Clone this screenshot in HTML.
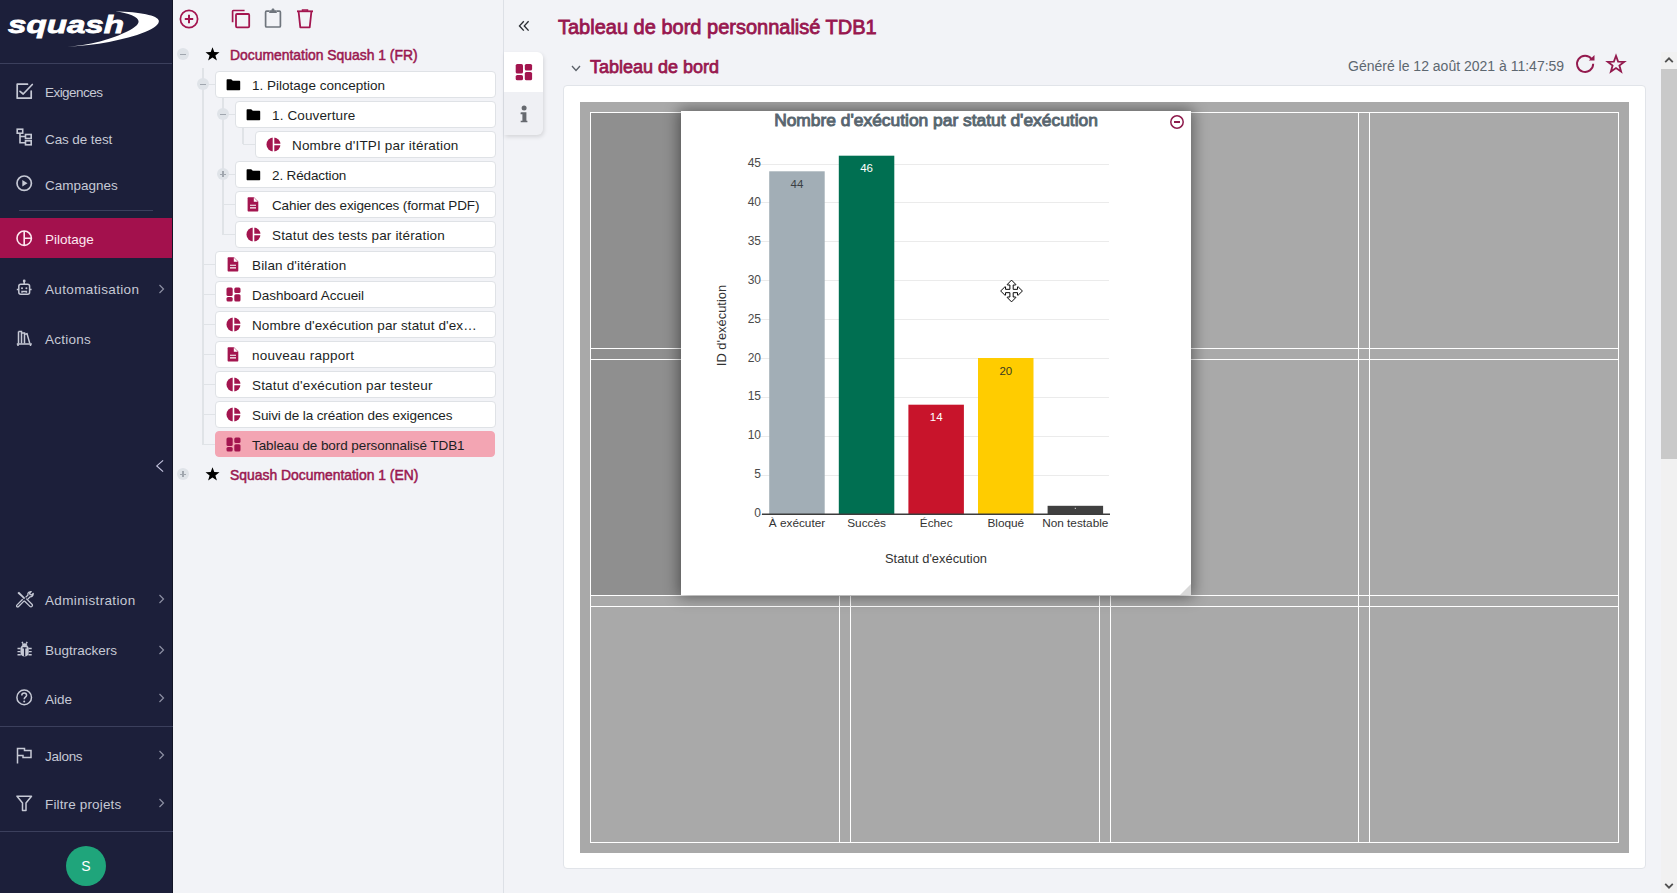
<!DOCTYPE html>
<html><head><meta charset="utf-8">
<style>
*{box-sizing:border-box;margin:0;padding:0}
html,body{width:1677px;height:893px;overflow:hidden;background:#f2f3f7;font-family:"Liberation Sans",sans-serif}
.abs{position:absolute}
#sb{position:absolute;left:0;top:0;width:173px;height:893px;background:#1c1f3a}
.sep{position:absolute;height:1px;background:#3b3f5c}
.mt{position:absolute;left:45px;color:#c6c9d5;font-size:13.5px;line-height:13.5px;white-space:nowrap}
.ic{position:absolute;left:16px}
.ch{position:absolute;left:158px}
#tree{position:absolute;left:0;top:0}
.node{position:absolute;height:27px;background:#fff;border:1px solid #dfe2e6;border-radius:4px}
.node.sel{background:#f3a5b3;border-color:#f3a5b3}
.nt{position:absolute;margin-top:1px;font-size:13.5px;line-height:13.5px;color:#1c1f24;white-space:nowrap}
.rt{position:absolute;font-size:13.9px;line-height:13.9px;font-weight:400;-webkit-text-stroke:0.5px currentColor;color:#9a1850;white-space:nowrap}
.vl{position:absolute;width:1.5px;background:#e0e3e7}
.hl{position:absolute;height:1px;background:#e0e3e7}
.tg{position:absolute;width:12px;height:12px;border-radius:50%;background:#dfe3e8}
.tg:before{content:"";position:absolute;left:3px;top:5.5px;width:6px;height:1.3px;background:#a0a6ae}
.tg.plus:after{content:"";position:absolute;left:5.4px;top:3px;width:1.3px;height:6px;background:#a0a6ae}
.ttl{font-size:20px;line-height:20px;font-weight:400;-webkit-text-stroke:0.8px currentColor;color:#98174f;white-space:nowrap}
.sub{font-size:18px;line-height:18px;font-weight:400;-webkit-text-stroke:0.75px currentColor;color:#98174f;white-space:nowrap}
.gen{font-size:14px;line-height:14px;color:#5d6770;white-space:nowrap}
.cell{position:absolute;border:1px solid #fff}
.ctt{font-size:17.4px;line-height:17.4px;font-weight:400;-webkit-text-stroke:0.95px currentColor;color:#58666f;white-space:nowrap}
.tk{font-size:12px;line-height:13px;color:#4a4a4a;text-align:right}
.axt{font-size:12.9px;line-height:13px;color:#333;white-space:nowrap}
</style></head>
<body>
<!-- SIDEBAR -->
<div id="sb">
  <svg class="abs" style="left:0;top:0" width="173" height="60" viewBox="0 0 173 60">
    <text x="8" y="32.6" font-family="Liberation Sans" font-weight="700" font-style="italic" font-size="24.5" fill="#fff" stroke="#fff" stroke-width="0.8" textLength="116" lengthAdjust="spacingAndGlyphs">squash</text>
    <path d="M67.6 46.7C95 45.5 125 40 145 32C155 28 159.5 24 158.8 20.5C158 15.5 140 12 115.4 11.2C128 13 139 16.5 138.6 21.8C138 27.5 123 35 100 41.5C88 44.5 77 46 67.6 46.7Z" fill="#fff"/>
  </svg>
  <div class="sep" style="left:0;top:63px;width:173px"></div>

  <!-- Exigences -->
  <svg class="ic" style="top:83px" width="18" height="17" viewBox="0 0 18 17"><path d="M11.5 1.2H1.2V15.2H15.2V8" fill="none" stroke="#c6c9d5" stroke-width="1.7" stroke-linejoin="round" stroke-linecap="round"/><path d="M4 8.3L7.2 11L16.3 1.5" fill="none" stroke="#c6c9d5" stroke-width="1.7" stroke-linecap="round" stroke-linejoin="round"/></svg>
  <div class="mt" style="top:86px;letter-spacing:-0.55px">Exigences</div>
  <!-- Cas de test -->
  <svg class="ic" style="top:128px" width="18" height="18" viewBox="0 0 18 18"><g fill="none" stroke="#c6c9d5" stroke-width="1.6"><rect x="1.2" y="1.2" width="5.5" height="4"/><rect x="9.5" y="6.5" width="5.7" height="4"/><rect x="9.5" y="12.8" width="5.7" height="4"/><path d="M4 5.2V14.8H9.5M4 8.5H9.5"/></g></svg>
  <div class="mt" style="top:133.3px;letter-spacing:-0.1px">Cas de test</div>
  <!-- Campagnes -->
  <svg class="ic" style="top:175px" width="18" height="18" viewBox="0 0 18 18"><circle cx="8.2" cy="8.2" r="7.2" fill="none" stroke="#c6c9d5" stroke-width="1.7"/><path d="M6.3 5V11.4L11.5 8.2Z" fill="#c6c9d5"/></svg>
  <div class="mt" style="top:179.3px">Campagnes</div>
  <div class="sep" style="left:19px;top:210px;width:134px"></div>
  <!-- Pilotage -->
  <div class="abs" style="left:0;top:218px;width:173px;height:40px;background:#a3114d"></div>
  <svg class="ic" style="top:230px" width="18" height="18" viewBox="0 0 18 18"><g fill="none" stroke="#fde8f0" stroke-width="1.6"><circle cx="8.2" cy="8.2" r="7.2"/><path d="M8.2 1V15.4M8.2 8.2H15.4"/></g></svg>
  <div class="mt" style="top:233.3px;color:#fde8f0">Pilotage</div>
  <!-- Automatisation -->
  <svg class="ic" style="top:279px" width="18" height="18" viewBox="0 0 18 18"><g fill="none" stroke="#c6c9d5" stroke-width="1.5"><rect x="2.8" y="5.2" width="10.8" height="10" rx="2"/><path d="M8.2 2.5V5.2M0.8 10.5H2.8M13.6 10.5H15.6"/><path d="M6 13.8V12.5H10.4V13.8"/></g><circle cx="8.2" cy="2" r="1.4" fill="#c6c9d5"/><circle cx="6" cy="9.3" r="1" fill="#c6c9d5"/><circle cx="10.4" cy="9.3" r="1" fill="#c6c9d5"/></svg>
  <div class="mt" style="top:283.3px;letter-spacing:0.36px">Automatisation</div>
  <svg class="ch" style="top:284px" width="7" height="10" viewBox="0 0 7 10"><path d="M1.5 1L5.5 5L1.5 9" fill="none" stroke="#8d90a3" stroke-width="1.2"/></svg>
  <!-- Actions -->
  <svg class="ic" style="top:330px" width="18" height="18" viewBox="0 0 18 18"><g fill="none" stroke="#c6c9d5" stroke-width="1.5"><path d="M2.5 1.5V13.5M2.5 1.5H5.5V13.5M5.5 3H8.5V13.5"/><path d="M9 4.2L11 3.6L13.8 13.5"/><path d="M0.8 14H15.8M2 14V16M14.5 14V16"/></g></svg>
  <div class="mt" style="top:333.3px;letter-spacing:0.25px">Actions</div>

  <svg class="abs" style="left:155px;top:459px" width="10" height="14" viewBox="0 0 10 14"><path d="M8.1 1.4L1.8 6.9L8.1 12.6" fill="none" stroke="#c3c3de" stroke-width="1.2"/></svg>
  <div class="abs" style="left:172px;top:0;width:1px;height:893px;background:#131527"></div>
  <!-- Administration -->
  <svg class="ic" style="top:591px" width="18" height="18" viewBox="0 0 18 18"><g fill="none" stroke="#c6c9d5" stroke-width="1.3" stroke-linejoin="round"><path d="M10.3 7.6L16 13.3C16.6 13.9 16.6 14.8 16 15.4S14.5 16 13.9 15.4L8.2 9.7"/><path d="M8.2 9.9L2.6 15.5C2 16.1 1.3 16.1 0.9 15.7S0.5 14.5 1.1 13.9L6.7 8.3"/><path d="M9.6 6.4L12 4C11.6 2.6 12.2 1 13.8 0.8L15.2 0.6L13.6 2.4L14.2 3.6L15.6 4L17.2 2.5C17.3 4.6 16 5.8 14.2 5.8L11.6 8.4"/></g><path d="M1.6 1.8L3 0.8L7 4.8L9.2 7L8 8.2L5.8 6L1.8 2.6Z" fill="#c6c9d5"/></svg>
  <div class="mt" style="top:594.3px;letter-spacing:0.36px">Administration</div>
  <svg class="ch" style="top:594px" width="7" height="10" viewBox="0 0 7 10"><path d="M1.5 1L5.5 5L1.5 9" fill="none" stroke="#8d90a3" stroke-width="1.2"/></svg>
  <!-- Bugtrackers -->
  <svg class="ic" style="top:641px" width="18" height="18" viewBox="0 0 18 18"><path d="M4.5 7.2C4.5 5.3 6.3 4 8.6 4S12.7 5.3 12.7 7.2V11.8C12.7 14 11 15.6 8.6 15.6S4.5 14 4.5 11.8Z" fill="#c6c9d5"/><path d="M5.8 4.8C5.8 3.2 7 2.2 8.6 2.2S11.4 3.2 11.4 4.8Z" fill="#c6c9d5"/><path d="M6 0.8L7 2.6M11.2 0.8L10.2 2.6M1.5 7.5H4.5M1.5 10.6H4.5M1.5 13.8H4.8M12.7 7.5H15.7M12.7 10.6H15.7M12.4 13.8H15.7" stroke="#c6c9d5" stroke-width="1.4"/><path d="M8.6 7V15.2M6.6 6.8H10.6" stroke="#1c1f3a" stroke-width="1.3"/></svg>
  <div class="mt" style="top:644.3px">Bugtrackers</div>
  <svg class="ch" style="top:645px" width="7" height="10" viewBox="0 0 7 10"><path d="M1.5 1L5.5 5L1.5 9" fill="none" stroke="#8d90a3" stroke-width="1.2"/></svg>
  <!-- Aide -->
  <svg class="ic" style="top:689px" width="18" height="18" viewBox="0 0 18 18"><circle cx="8.2" cy="8.4" r="7.3" fill="none" stroke="#c6c9d5" stroke-width="1.5"/><path d="M5.8 6.4C5.8 4.9 6.9 4 8.2 4S10.6 4.9 10.6 6.3C10.6 8.2 8.2 8.2 8.2 10.2" fill="none" stroke="#c6c9d5" stroke-width="1.5"/><circle cx="8.2" cy="12.5" r="1" fill="#c6c9d5"/></svg>
  <div class="mt" style="top:693.3px">Aide</div>
  <svg class="ch" style="top:693px" width="7" height="10" viewBox="0 0 7 10"><path d="M1.5 1L5.5 5L1.5 9" fill="none" stroke="#8d90a3" stroke-width="1.2"/></svg>
  <div class="sep" style="left:0;top:726px;width:173px"></div>
  <!-- Jalons -->
  <svg class="ic" style="top:747px" width="18" height="18" viewBox="0 0 18 18"><path d="M1.5 16.5V1.5H8.5V3.5H15V10.5H7V8.5H1.5" fill="none" stroke="#c6c9d5" stroke-width="1.5"/></svg>
  <div class="mt" style="top:750.3px;letter-spacing:-0.28px">Jalons</div>
  <svg class="ch" style="top:750px" width="7" height="10" viewBox="0 0 7 10"><path d="M1.5 1L5.5 5L1.5 9" fill="none" stroke="#8d90a3" stroke-width="1.2"/></svg>
  <!-- Filtre projets -->
  <svg class="ic" style="top:795px" width="18" height="18" viewBox="0 0 18 18"><path d="M1 1.2H15.5L10 8V15.5H6.5V8Z" fill="none" stroke="#c6c9d5" stroke-width="1.5" stroke-linejoin="round"/></svg>
  <div class="mt" style="top:798.3px;letter-spacing:0.15px">Filtre projets</div>
  <svg class="ch" style="top:798px" width="7" height="10" viewBox="0 0 7 10"><path d="M1.5 1L5.5 5L1.5 9" fill="none" stroke="#8d90a3" stroke-width="1.2"/></svg>
  <div class="sep" style="left:0;top:831px;width:173px"></div>
  <div class="abs" style="left:66px;top:846px;width:40px;height:40px;border-radius:50%;background:#1fa57b;color:#fff;font-size:14px;line-height:40px;text-align:center">S</div>
</div>

<!-- TREE -->
<div id="tree">
<svg class="abs" style="left:179px;top:9px" width="20" height="20" viewBox="0 0 20 20"><circle cx="10" cy="10" r="8.6" fill="none" stroke="#a3154f" stroke-width="1.7"/><path d="M10 5.8V14.2M5.8 10H14.2" stroke="#a3154f" stroke-width="2"/></svg>
<svg class="abs" style="left:231px;top:9px" width="20" height="20" viewBox="0 0 20 20"><path d="M1.6 13.2V2.2C1.6 1.8 1.9 1.5 2.3 1.5H13.6" fill="none" stroke="#a3154f" stroke-width="1.7"/><rect x="5" y="5" width="13.2" height="13.3" rx="1" fill="none" stroke="#a3154f" stroke-width="1.8"/></svg>
<svg class="abs" style="left:264px;top:8px" width="19" height="21" viewBox="0 0 19 21"><path d="M5 3.2H2.6C2 3.2 1.6 3.6 1.6 4.2V18C1.6 18.6 2 19 2.6 19H15.4C16 19 16.4 18.6 16.4 18V4.2C16.4 3.6 16 3.2 15.4 3.2H13" fill="none" stroke="#6f757d" stroke-width="1.7"/><path d="M5.2 2.2H7.5C7.6 1 8.2 0.6 9 0.6S10.4 1 10.5 2.2H12.8V5H5.2Z" fill="#6f757d"/></svg>
<svg class="abs" style="left:296px;top:9px" width="18" height="20" viewBox="0 0 18 20"><path d="M1 2.3H17" stroke="#a3154f" stroke-width="1.8"/><path d="M6.5 2V0.9H11.5V2" fill="none" stroke="#a3154f" stroke-width="1.5"/><path d="M2.6 2.5L4.3 18.3H13.7L15.4 2.5" fill="none" stroke="#a3154f" stroke-width="1.8" stroke-linejoin="round"/></svg>
<div class="tg" style="left:177px;top:48px"></div>
<svg class="abs" style="left:205px;top:47px" width="15" height="14" viewBox="0 0 15 14"><path d="M7.5 0.2L9.3 5.1L14.5 5.2L10.4 8.4L11.9 13.4L7.5 10.4L3.1 13.4L4.6 8.4L0.5 5.2L5.7 5.1Z" fill="#000"/></svg>
<div class="rt" style="left:230px;top:49px">Documentation Squash 1 (FR)</div>
<div class="vl" style="left:202px;top:68px;height:377px"></div>
<div class="vl" style="left:222px;top:98px;height:137px"></div>
<div class="vl" style="left:242px;top:128px;height:16px"></div>
<div class="hl" style="left:203px;top:84px;width:12px"></div>
<div class="tg" style="left:197px;top:78px"></div>
<div class="node" style="left:215px;top:71px;width:281px"></div>
<svg class="abs" style="left:226px;top:79px" width="15" height="12" viewBox="0 0 15 12"><path d="M0.6 1.3C0.6 0.7 1 0.3 1.6 0.3H5.2L6.8 1.8H13.2C13.8 1.8 14.2 2.2 14.2 2.8V10.2C14.2 10.8 13.8 11.2 13.2 11.2H1.6C1 11.2 0.6 10.8 0.6 10.2Z" fill="#000"/></svg>
<div class="nt" style="left:252px;top:78px;letter-spacing:0.01px">1. Pilotage conception</div>
<div class="hl" style="left:223px;top:114px;width:12px"></div>
<div class="tg" style="left:217px;top:108px"></div>
<div class="node" style="left:235px;top:101px;width:261px"></div>
<svg class="abs" style="left:246px;top:109px" width="15" height="12" viewBox="0 0 15 12"><path d="M0.6 1.3C0.6 0.7 1 0.3 1.6 0.3H5.2L6.8 1.8H13.2C13.8 1.8 14.2 2.2 14.2 2.8V10.2C14.2 10.8 13.8 11.2 13.2 11.2H1.6C1 11.2 0.6 10.8 0.6 10.2Z" fill="#000"/></svg>
<div class="nt" style="left:272px;top:108px;letter-spacing:0.13px">1. Couverture</div>
<div class="hl" style="left:243px;top:144px;width:12px"></div>
<div class="node" style="left:255px;top:131px;width:241px"></div>
<svg class="abs" style="left:266px;top:137px" width="15" height="15" viewBox="0 0 15 15"><circle cx="7.5" cy="7.5" r="7" fill="#a3154f"/><path d="M7.5 0V15M7.5 7.5H15" stroke="#fff" stroke-width="1.6"/></svg>
<div class="nt" style="left:292px;top:138px;letter-spacing:0.18px">Nombre d&#39;ITPI par itération</div>
<div class="hl" style="left:223px;top:174px;width:12px"></div>
<div class="tg plus" style="left:217px;top:168px"></div>
<div class="node" style="left:235px;top:161px;width:261px"></div>
<svg class="abs" style="left:246px;top:169px" width="15" height="12" viewBox="0 0 15 12"><path d="M0.6 1.3C0.6 0.7 1 0.3 1.6 0.3H5.2L6.8 1.8H13.2C13.8 1.8 14.2 2.2 14.2 2.8V10.2C14.2 10.8 13.8 11.2 13.2 11.2H1.6C1 11.2 0.6 10.8 0.6 10.2Z" fill="#000"/></svg>
<div class="nt" style="left:272px;top:168px;letter-spacing:-0.13px">2. Rédaction</div>
<div class="hl" style="left:223px;top:204px;width:12px"></div>
<div class="node" style="left:235px;top:191px;width:261px"></div>
<svg class="abs" style="left:247px;top:197px" width="12" height="15" viewBox="0 0 12 15"><path d="M1.6 0.2H7L11.3 4.5V13.4C11.3 14 10.9 14.4 10.3 14.4H1.6C1 14.4 0.6 14 0.6 13.4V1.2C0.6 0.6 1 0.2 1.6 0.2Z" fill="#a3154f"/><path d="M6.8 0.6V4.7H10.9Z" fill="#fff"/><path d="M3 8.3H9M3 10.9H9" stroke="#fff" stroke-width="1.1"/></svg>
<div class="nt" style="left:272px;top:198px;letter-spacing:-0.13px">Cahier des exigences (format PDF)</div>
<div class="hl" style="left:223px;top:234px;width:12px"></div>
<div class="node" style="left:235px;top:221px;width:261px"></div>
<svg class="abs" style="left:246px;top:227px" width="15" height="15" viewBox="0 0 15 15"><circle cx="7.5" cy="7.5" r="7" fill="#a3154f"/><path d="M7.5 0V15M7.5 7.5H15" stroke="#fff" stroke-width="1.6"/></svg>
<div class="nt" style="left:272px;top:228px;letter-spacing:0.16px">Statut des tests par itération</div>
<div class="hl" style="left:203px;top:264px;width:12px"></div>
<div class="node" style="left:215px;top:251px;width:281px"></div>
<svg class="abs" style="left:227px;top:257px" width="12" height="15" viewBox="0 0 12 15"><path d="M1.6 0.2H7L11.3 4.5V13.4C11.3 14 10.9 14.4 10.3 14.4H1.6C1 14.4 0.6 14 0.6 13.4V1.2C0.6 0.6 1 0.2 1.6 0.2Z" fill="#a3154f"/><path d="M6.8 0.6V4.7H10.9Z" fill="#fff"/><path d="M3 8.3H9M3 10.9H9" stroke="#fff" stroke-width="1.1"/></svg>
<div class="nt" style="left:252px;top:258px;letter-spacing:0.15px">Bilan d&#39;itération</div>
<div class="hl" style="left:203px;top:294px;width:12px"></div>
<div class="node" style="left:215px;top:281px;width:281px"></div>
<svg class="abs" style="left:226px;top:287px" width="15" height="15" viewBox="0 0 15 15"><g fill="#a3154f"><rect x="0.5" y="0.5" width="6.2" height="8.4" rx="1.5"/><rect x="8.3" y="0.5" width="6.2" height="5.6" rx="1.5"/><rect x="0.5" y="10" width="6.2" height="4.5" rx="1.5"/><rect x="8.3" y="7.2" width="6.2" height="7.3" rx="1.5"/></g></svg>
<div class="nt" style="left:252px;top:288px;letter-spacing:-0.03px">Dashboard Accueil</div>
<div class="hl" style="left:203px;top:324px;width:12px"></div>
<div class="node" style="left:215px;top:311px;width:281px"></div>
<svg class="abs" style="left:226px;top:317px" width="15" height="15" viewBox="0 0 15 15"><circle cx="7.5" cy="7.5" r="7" fill="#a3154f"/><path d="M7.5 0V15M7.5 7.5H15" stroke="#fff" stroke-width="1.6"/></svg>
<div class="nt" style="left:252px;top:318px;letter-spacing:0.1px">Nombre d&#39;exécution par statut d&#39;ex…</div>
<div class="hl" style="left:203px;top:354px;width:12px"></div>
<div class="node" style="left:215px;top:341px;width:281px"></div>
<svg class="abs" style="left:227px;top:347px" width="12" height="15" viewBox="0 0 12 15"><path d="M1.6 0.2H7L11.3 4.5V13.4C11.3 14 10.9 14.4 10.3 14.4H1.6C1 14.4 0.6 14 0.6 13.4V1.2C0.6 0.6 1 0.2 1.6 0.2Z" fill="#a3154f"/><path d="M6.8 0.6V4.7H10.9Z" fill="#fff"/><path d="M3 8.3H9M3 10.9H9" stroke="#fff" stroke-width="1.1"/></svg>
<div class="nt" style="left:252px;top:348px;letter-spacing:0.26px">nouveau rapport</div>
<div class="hl" style="left:203px;top:384px;width:12px"></div>
<div class="node" style="left:215px;top:371px;width:281px"></div>
<svg class="abs" style="left:226px;top:377px" width="15" height="15" viewBox="0 0 15 15"><circle cx="7.5" cy="7.5" r="7" fill="#a3154f"/><path d="M7.5 0V15M7.5 7.5H15" stroke="#fff" stroke-width="1.6"/></svg>
<div class="nt" style="left:252px;top:378px;letter-spacing:0.18px">Statut d&#39;exécution par testeur</div>
<div class="hl" style="left:203px;top:414px;width:12px"></div>
<div class="node" style="left:215px;top:401px;width:281px"></div>
<svg class="abs" style="left:226px;top:407px" width="15" height="15" viewBox="0 0 15 15"><circle cx="7.5" cy="7.5" r="7" fill="#a3154f"/><path d="M7.5 0V15M7.5 7.5H15" stroke="#fff" stroke-width="1.6"/></svg>
<div class="nt" style="left:252px;top:408px;letter-spacing:-0.11px">Suivi de la création des exigences</div>
<div class="hl" style="left:203px;top:444px;width:12px"></div>
<div class="node sel" style="left:215px;top:431px;width:280px;height:26px"></div>
<svg class="abs" style="left:226px;top:437px" width="15" height="15" viewBox="0 0 15 15"><g fill="#a3154f"><rect x="0.5" y="0.5" width="6.2" height="8.4" rx="1.5"/><rect x="8.3" y="0.5" width="6.2" height="5.6" rx="1.5"/><rect x="0.5" y="10" width="6.2" height="4.5" rx="1.5"/><rect x="8.3" y="7.2" width="6.2" height="7.3" rx="1.5"/></g></svg>
<div class="nt" style="left:252px;top:438px;letter-spacing:-0.08px">Tableau de bord personnalisé TDB1</div>
<div class="tg plus" style="left:177px;top:468px"></div>
<svg class="abs" style="left:205px;top:467px" width="15" height="14" viewBox="0 0 15 14"><path d="M7.5 0.2L9.3 5.1L14.5 5.2L10.4 8.4L11.9 13.4L7.5 10.4L3.1 13.4L4.6 8.4L0.5 5.2L5.7 5.1Z" fill="#000"/></svg>
<div class="rt" style="left:230px;top:469px">Squash Documentation 1 (EN)</div>
<div class="abs" style="left:503px;top:0;width:1px;height:893px;background:#dde0e6"></div>
</div>
<!-- MAIN -->
<div id="main">
  <svg class="abs" style="left:518px;top:20px" width="12" height="12" viewBox="0 0 12 12"><path d="M5.8 1.2L1.5 5.9L5.8 10.6M10.6 1.2L6.3 5.9L10.6 10.6" fill="none" stroke="#2a2d33" stroke-width="1.4"/></svg>
  <div class="abs ttl" style="left:558px;top:17px">Tableau de bord personnalisé TDB1</div>
  <!-- tab bar -->
  <div class="abs" style="left:504px;top:52px;width:39px;height:83px;background:#eff0f4;border-radius:0 6px 6px 0;box-shadow:1px 2px 4px rgba(0,0,0,0.12)"></div>
  <div class="abs" style="left:504px;top:52px;width:39px;height:40px;background:#fff;border-radius:0 6px 0 0"></div>
  <svg class="abs" style="left:515px;top:63px" width="18" height="18" viewBox="0 0 18 18"><g fill="#a3154f"><rect x="0.7" y="0.9" width="7.3" height="9.6" rx="1.6"/><rect x="9.8" y="0.9" width="7.3" height="6.6" rx="1.6"/><rect x="0.7" y="12" width="7.3" height="5.3" rx="1.6"/><rect x="9.8" y="9" width="7.3" height="8.3" rx="1.6"/></g></svg>
  <svg class="abs" style="left:518px;top:104px" width="12" height="20" viewBox="0 0 12 20"><circle cx="6.1" cy="4" r="2.5" fill="#66696f"/><path d="M2.6 8.4C3.5 8.2 5.5 8 8.4 8.3V16.8H9.4V18.2H2.7V16.8H4.4V10.3H2.6Z" fill="#66696f"/></svg>
  <!-- section header -->
  <svg class="abs" style="left:571px;top:64px" width="10" height="9" viewBox="0 0 10 9"><path d="M1 2L5 6.5L9 2" fill="none" stroke="#5a6068" stroke-width="1.3"/></svg>
  <div class="abs sub" style="left:590px;top:58px">Tableau de bord</div>
  <div class="abs gen" style="left:1348px;top:59px">Généré le 12 août 2021 à 11:47:59</div>
  <svg class="abs" style="left:1574px;top:53px" width="22" height="22" viewBox="0 0 22 22"><path d="M19.2 10.8A8.1 8.1 0 1 1 17.6 6" fill="none" stroke="#931a4e" stroke-width="1.9"/><path d="M20.5 2V7.6H14.8Z" fill="#931a4e"/></svg>
  <svg class="abs" style="left:1605px;top:53px" width="22" height="22" viewBox="0 0 22 22"><path d="M11 2.8L13.1 8.6L19.3 8.8L14.4 12.6L16.1 18.6L11 15.1L5.9 18.6L7.6 12.6L2.7 8.8L8.9 8.6Z" fill="none" stroke="#931a4e" stroke-width="1.8" stroke-linejoin="miter"/></svg>
  <!-- card -->
  <div class="abs" style="left:563px;top:85px;width:1083px;height:784px;background:#fff;border:1px solid #e1e4e9;border-radius:4px"></div>
  <div class="abs" style="left:580px;top:102px;width:1049px;height:751px;background:#a9a9a9"></div>
  <!-- placeholder -->
  <div class="abs" style="left:590px;top:112px;width:510px;height:484px;background:#8f8f8f"></div>
  <!-- cells -->
<div class="abs" style="left:590px;top:112px;width:1029px;height:1px;background:#fff"></div>
<div class="abs" style="left:590px;top:348px;width:1029px;height:1px;background:#fff"></div>
<div class="abs" style="left:590px;top:359px;width:1029px;height:1px;background:#fff"></div>
<div class="abs" style="left:590px;top:595px;width:1029px;height:1px;background:#fff"></div>
<div class="abs" style="left:590px;top:606px;width:1029px;height:1px;background:#fff"></div>
<div class="abs" style="left:590px;top:842px;width:1029px;height:1px;background:#fff"></div>
<div class="abs" style="left:590px;top:112px;width:1px;height:731px;background:#fff"></div>
<div class="abs" style="left:839px;top:112px;width:1px;height:731px;background:#fff"></div>
<div class="abs" style="left:850px;top:112px;width:1px;height:731px;background:#fff"></div>
<div class="abs" style="left:1099px;top:112px;width:1px;height:731px;background:#fff"></div>
<div class="abs" style="left:1110px;top:112px;width:1px;height:731px;background:#fff"></div>
<div class="abs" style="left:1358px;top:112px;width:1px;height:731px;background:#fff"></div>
<div class="abs" style="left:1369px;top:112px;width:1px;height:731px;background:#fff"></div>
<div class="abs" style="left:1618px;top:112px;width:1px;height:731px;background:#fff"></div>
<!-- chart -->
<div class="abs" style="left:580px;top:102px;width:1049px;height:751px;overflow:hidden"><div class="abs" style="left:101px;top:9px;width:510px;height:484px;background:#fff;box-shadow:0 0 14px 2px rgba(0,0,0,0.45)"></div></div>
<div class="abs ctt" style="left:681px;width:510px;top:112px;text-align:center">Nombre d&#39;exécution par statut d&#39;exécution</div>
<svg class="abs" style="left:1169px;top:114px" width="16" height="16" viewBox="0 0 16 16"><circle cx="8" cy="8" r="6.2" fill="none" stroke="#8e1b4c" stroke-width="1.5"/><path d="M5 8H11" stroke="#8e1b4c" stroke-width="2"/></svg>
<svg class="abs" style="left:681px;top:111px" width="510" height="484" viewBox="681 111 510 484">
<path d="M758 514.5H763" stroke="#ebebeb" stroke-width="1"/>
<path d="M763 475.5H1109" stroke="#ebebeb" stroke-width="1"/>
<path d="M758 475.5H763" stroke="#ebebeb" stroke-width="1"/>
<path d="M763 436.5H1109" stroke="#ebebeb" stroke-width="1"/>
<path d="M758 436.5H763" stroke="#ebebeb" stroke-width="1"/>
<path d="M763 397.5H1109" stroke="#ebebeb" stroke-width="1"/>
<path d="M758 397.5H763" stroke="#ebebeb" stroke-width="1"/>
<path d="M763 358.5H1109" stroke="#ebebeb" stroke-width="1"/>
<path d="M758 358.5H763" stroke="#ebebeb" stroke-width="1"/>
<path d="M763 319.5H1109" stroke="#ebebeb" stroke-width="1"/>
<path d="M758 319.5H763" stroke="#ebebeb" stroke-width="1"/>
<path d="M763 280.5H1109" stroke="#ebebeb" stroke-width="1"/>
<path d="M758 280.5H763" stroke="#ebebeb" stroke-width="1"/>
<path d="M763 241.5H1109" stroke="#ebebeb" stroke-width="1"/>
<path d="M758 241.5H763" stroke="#ebebeb" stroke-width="1"/>
<path d="M763 202.5H1109" stroke="#ebebeb" stroke-width="1"/>
<path d="M758 202.5H763" stroke="#ebebeb" stroke-width="1"/>
<path d="M763 164.5H1109" stroke="#ebebeb" stroke-width="1"/>
<path d="M758 164.5H763" stroke="#ebebeb" stroke-width="1"/>
<rect x="769.2" y="171.3" width="55.5" height="342.8" fill="#a2aeb6"/>
<text x="797.0" y="187.8" text-anchor="middle" font-family="Liberation Sans" font-size="11.5" fill="#3a3f44">44</text>
<text x="797.0" y="526.5" text-anchor="middle" font-family="Liberation Sans" font-size="11.8" fill="#333">À exécuter</text>
<rect x="838.8" y="155.7" width="55.5" height="358.4" fill="#006f51"/>
<text x="866.6" y="172.2" text-anchor="middle" font-family="Liberation Sans" font-size="11.5" fill="#ffffff">46</text>
<text x="866.6" y="526.5" text-anchor="middle" font-family="Liberation Sans" font-size="11.8" fill="#333">Succès</text>
<rect x="908.4" y="404.7" width="55.5" height="109.4" fill="#c8142b"/>
<text x="936.2" y="421.2" text-anchor="middle" font-family="Liberation Sans" font-size="11.5" fill="#ffffff">14</text>
<text x="936.2" y="526.5" text-anchor="middle" font-family="Liberation Sans" font-size="11.8" fill="#333">Échec</text>
<rect x="978.0" y="358.0" width="55.5" height="156.1" fill="#ffcc00"/>
<text x="1005.8" y="374.5" text-anchor="middle" font-family="Liberation Sans" font-size="11.5" fill="#3a3a20">20</text>
<text x="1005.8" y="526.5" text-anchor="middle" font-family="Liberation Sans" font-size="11.8" fill="#333">Bloqué</text>
<rect x="1047.6" y="505.8" width="55.5" height="8.3" fill="#404040"/>
<rect x="1074.8" y="507.8" width="1" height="1" fill="#fff"/>
<text x="1075.3" y="526.5" text-anchor="middle" font-family="Liberation Sans" font-size="11.8" fill="#333">Non testable</text>
<path d="M762 514.3H1110" stroke="#3c3c3c" stroke-width="1.4"/>
</svg>
<div class="abs tk" style="left:720px;width:41px;top:507.1px">0</div>
<div class="abs tk" style="left:720px;width:41px;top:468.2px">5</div>
<div class="abs tk" style="left:720px;width:41px;top:429.3px">10</div>
<div class="abs tk" style="left:720px;width:41px;top:390.4px">15</div>
<div class="abs tk" style="left:720px;width:41px;top:351.5px">20</div>
<div class="abs tk" style="left:720px;width:41px;top:312.6px">25</div>
<div class="abs tk" style="left:720px;width:41px;top:273.7px">30</div>
<div class="abs tk" style="left:720px;width:41px;top:234.8px">35</div>
<div class="abs tk" style="left:720px;width:41px;top:195.9px">40</div>
<div class="abs tk" style="left:720px;width:41px;top:157.0px">45</div>
<div class="abs axt" style="left:836px;width:200px;top:552px;text-align:center">Statut d&#39;exécution</div>
<div class="abs axt" style="left:621px;width:200px;top:319px;text-align:center;transform:rotate(-90deg)">ID d&#39;exécution</div>
<svg class="abs" style="left:999.5px;top:278.5px" width="24" height="24" viewBox="0 0 26 26"><path d="M12.5 1.2L17 5.8V6.5H14.3V11.2H19V8.5H19.7L24.3 13L19.7 17.5H19V14.8H14.3V19.5H17V20.2L12.5 24.8L8 20.2V19.5H10.7V14.8H6V17.5H5.3L0.7 13L5.3 8.5H6V11.2H10.7V6.5H8V5.8Z" fill="#fff" stroke="#000" stroke-width="1.05" stroke-linejoin="miter"/></svg>
<svg class="abs" style="left:1180px;top:584px" width="11" height="11" viewBox="0 0 11 11"><path d="M11 0V11H0Z" fill="#d8d8d8"/></svg>
<!-- scrollbar -->
  <div class="abs" style="left:1661px;top:52px;width:16px;height:841px;background:#f1f1f1"></div>
  <div class="abs" style="left:1661px;top:69px;width:16px;height:390px;background:#c9c9c9"></div>
  <svg class="abs" style="left:1664px;top:56px" width="10" height="8" viewBox="0 0 10 8"><path d="M1.2 6.2L5 2.3L8.8 6.2" fill="none" stroke="#505050" stroke-width="1.8"/></svg>
  <svg class="abs" style="left:1664px;top:882px" width="10" height="8" viewBox="0 0 10 8"><path d="M1.2 1.8L5 5.7L8.8 1.8" fill="none" stroke="#505050" stroke-width="1.8"/></svg>
</div>

</body></html>
